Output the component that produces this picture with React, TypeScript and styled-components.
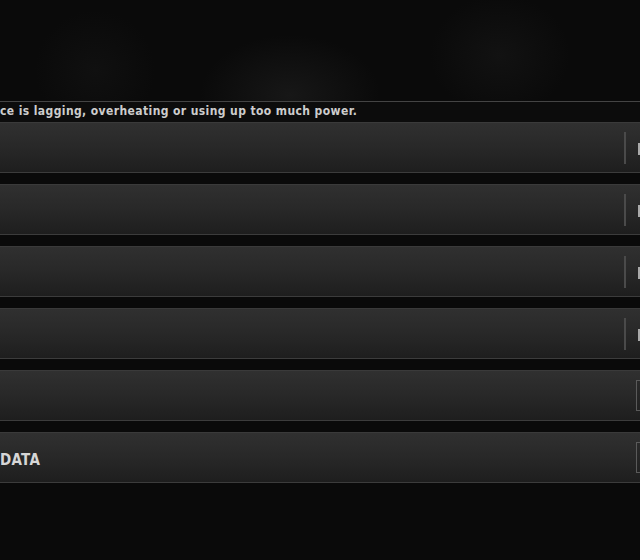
import styled, { createGlobalStyle } from "styled-components";
import { FC } from "react";

interface IRow {
  label?: string;
  control: "slider" | "button";
}

const rows: IRow[] = [
  { control: "slider" },
  { control: "slider" },
  { control: "slider" },
  { control: "slider" },
  { control: "button" },
  { label: "DATA", control: "button" },
];

const GlobalStyle = createGlobalStyle`
  html, body {
    margin: 0;
    padding: 0;
    background: #0a0a0a;
  }
  * {
    box-sizing: border-box;
  }
`;

const SettingRow: FC<{ row: IRow }> = ({ row }) => {
  return (
    <Row>
      <Label>{row.label}</Label>
      {row.control === "slider" ? (
        <Controls>
          <Divider />
          <Knob />
        </Controls>
      ) : (
        <Controls>
          <OutlineButton />
        </Controls>
      )}
    </Row>
  );
};

export default function App() {
  return (
    <>
      <GlobalStyle />
      <Screen>
        <Panel>
          <Description>
            ce is lagging, overheating or using up too much power.
          </Description>
          <List>
            {rows.map((row, i) => (
              <SettingRow key={i} row={row} />
            ))}
          </List>
        </Panel>
      </Screen>
    </>
  );
}

const Screen = styled.div`
  width: 640px;
  height: 560px;
  overflow: hidden;
  padding-top: 101px;
  background:
    radial-gradient(ellipse 90px 60px at 290px 95px, #171717 0%, rgba(23, 23, 23, 0) 100%),
    radial-gradient(ellipse 70px 60px at 500px 55px, #121212 0%, rgba(18, 18, 18, 0) 100%),
    radial-gradient(ellipse 60px 60px at 95px 70px, #101010 0%, rgba(16, 16, 16, 0) 100%),
    #0a0a0a;
`;

const Panel = styled.div`
  width: 720px;
  border-top: 1px solid #444;
`;

const Description = styled.div`
  height: 20px;
  background: #0c0c0c;
  padding-top: 2px;
  font-family: "DejaVu Sans Condensed", "DejaVu Sans", sans-serif;
  font-weight: bold;
  font-size: 12px;
  letter-spacing: 0.4px;
  line-height: 15px;
  color: #cdcdcd;
  white-space: nowrap;
`;

const List = styled.div`
  display: flex;
  flex-direction: column;
  gap: 11px;
`;

const Row = styled.div`
  height: 51px;
  display: grid;
  grid-template-columns: 1fr 96px;
  align-items: center;
  background: linear-gradient(180deg, #303030 0%, #282828 50%, #1e1e1e 100%);
  border-top: 1px solid #3a3a3a;
  border-bottom: 1px solid #3c3c3c;
`;

const Label = styled.div`
  padding-top: 4px;
  font-family: "DejaVu Sans Condensed", "DejaVu Sans", sans-serif;
  font-weight: bold;
  font-size: 15px;
  letter-spacing: 0.3px;
  color: #d6d6d6;
`;

const Controls = styled.div`
  display: flex;
  align-items: center;
  gap: 12px;
  height: 100%;
`;

const Divider = styled.div`
  width: 2px;
  height: 32px;
  background: #4a4a4a;
`;

const Knob = styled.div`
  width: 20px;
  height: 12px;
  margin-top: 2px;
  background: #a9a9a9;
`;

const OutlineButton = styled.div`
  width: 60px;
  height: 31px;
  margin-left: 12px;
  border: 1px solid #5a5a5a;
  background: linear-gradient(180deg, #2a2a2a 0%, #222 100%);
`;
